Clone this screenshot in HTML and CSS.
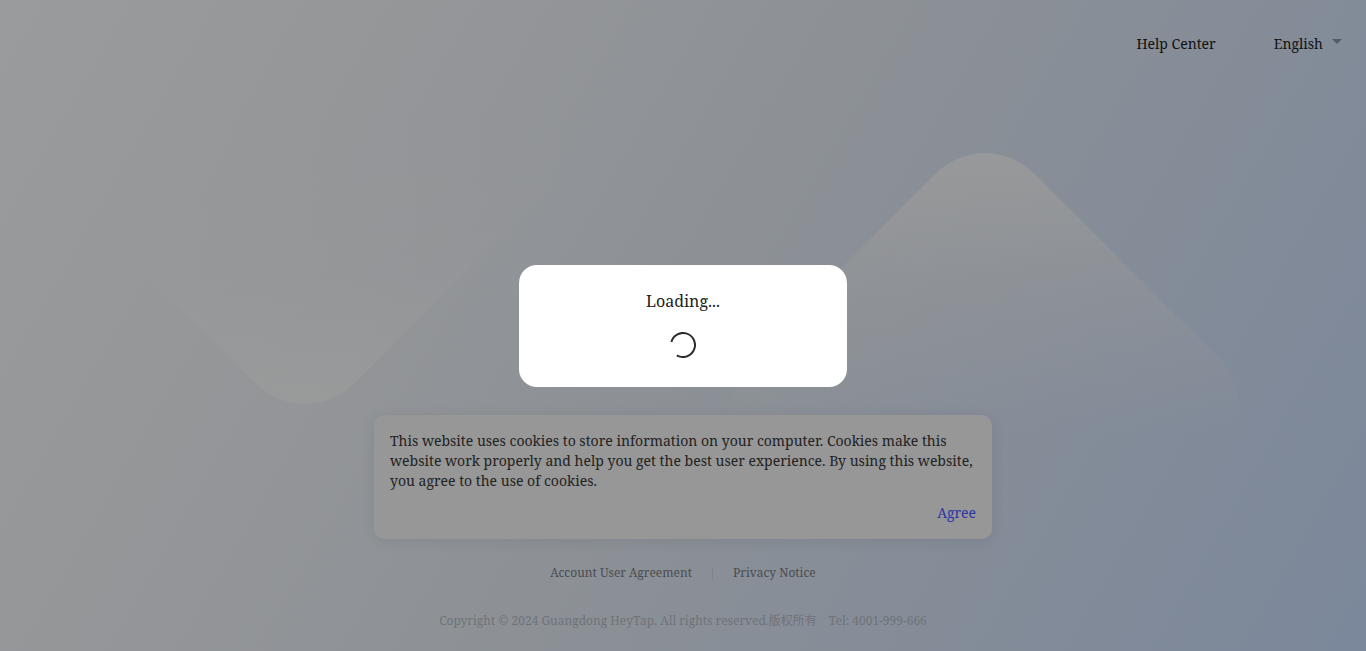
FILE: index.html
```html
<!DOCTYPE html>
<html lang="en">
<head>
<meta charset="utf-8">
<title>HeyTap</title>
<link rel="stylesheet" href="styles.css">
</head>
<body>
<div class="page">
  <div class="bg-shape mountain"></div>
  <div class="bg-shape valley"></div>
  <header class="topbar">
    <a class="top-link">Help Center</a>
    <div class="lang">
      <span>English</span>
      <span class="caret"></span>
    </div>
  </header>
  <main class="center">
    <div class="loading-box">
      <div class="loading-text">Loading...</div>
      <svg class="spinner" width="26" height="26" viewBox="0 0 26 26">
        <circle cx="13" cy="13" r="12" fill="none" stroke="#2b2b2b" stroke-width="2" stroke-dasharray="59.5 15.9" transform="rotate(195 13 13)"/>
      </svg>
    </div>
    <div class="cookie">
      <p class="cookie-text">This website uses cookies to store information on your computer. Cookies make this website work properly and help you get the best user experience. By using this website, you agree to the use of cookies.</p>
      <div class="cookie-actions"><a class="agree">Agree</a></div>
    </div>
    <nav class="links">
      <a>Account User Agreement</a>
      <span class="sep"></span>
      <a>Privacy Notice</a>
    </nav>
    <div class="copyright">
      <span>Copyright © 2024 Guangdong HeyTap. All rights reserved.版权所有</span>
      <span>Tel: 4001-999-666</span>
    </div>
  </main>
</div>
</body>
</html>
```
FILE: styles.css
```css
html, body {
  margin: 0;
  padding: 0;
  overflow: hidden;
}
.page {
  position: relative;
  width: 1366px;
  height: 651px;
  overflow: hidden;
  font-family: "Noto Serif", "DejaVu Serif", "Noto Sans CJK SC", serif;
  background: linear-gradient(120deg, #9a9b9c 0%, #939598 30%, #8b9096 55%, #7b879b 100%);
  color: #111;
}
.bg-shape {
  position: absolute;
  width: 400px;
  height: 400px;
  border-radius: 70px;
  transform: rotate(45deg);
  pointer-events: none;
}
.mountain {
  left: 785px;
  top: 207px;
  background: linear-gradient(135deg, rgba(158,157,155,0.8) 0%, rgba(152,152,152,0.4) 28%, rgba(140,145,150,0) 55%);
}
.valley {
  left: 105px;
  top: -50px;
  background: linear-gradient(315deg, rgba(158,158,156,0.65) 0%, rgba(152,153,154,0.28) 28%, rgba(145,148,150,0) 55%);
}
.topbar {
  position: relative;
  display: flex;
  justify-content: flex-end;
  align-items: center;
  gap: 58px;
  padding: 34px 24px 0 0;
  height: 20px;
  font-size: 14px;
  line-height: 20px;
}
.top-link {
  color: #111;
}
.lang {
  display: flex;
  align-items: center;
  gap: 9px;
}
.caret {
  width: 0;
  height: 0;
  border-left: 5.5px solid transparent;
  border-right: 5.5px solid transparent;
  border-top: 5px solid #555a63;
  margin-top: -5px;
}
.center {
  position: relative;
  display: flex;
  flex-direction: column;
  align-items: center;
}
.loading-box {
  margin-top: 211px;
  width: 328px;
  height: 122px;
  box-sizing: border-box;
  padding-top: 24px;
  background: #fff;
  border-radius: 18px;
  display: flex;
  flex-direction: column;
  align-items: center;
}
.loading-text {
  font-size: 16px;
  line-height: 24px;
  color: #222;
}
.spinner {
  margin-top: 19px;
  display: block;
}
.cookie {
  margin-top: 28px;
  width: 618px;
  height: 124px;
  box-sizing: border-box;
  padding: 16px;
  background: #979797;
  border-radius: 10px;
  box-shadow: 0 2px 14px rgba(0,0,0,0.08);
}
.cookie-text {
  margin: 0;
  font-size: 14px;
  line-height: 20px;
  color: #222;
}
.cookie-actions {
  margin-top: 12px;
  display: flex;
  justify-content: flex-end;
  font-size: 14px;
  line-height: 20px;
}
.agree {
  color: #2b35a6;
}
.links {
  margin-top: 24px;
  display: flex;
  align-items: center;
  gap: 20px;
  font-size: 12px;
  line-height: 20px;
  color: #4a4c4f;
}
.sep {
  width: 1px;
  height: 13px;
  background: #80848a;
}
.copyright {
  margin-top: 28px;
  display: flex;
  gap: 12px;
  font-size: 12px;
  line-height: 20px;
  color: #6f7378;
}
```
